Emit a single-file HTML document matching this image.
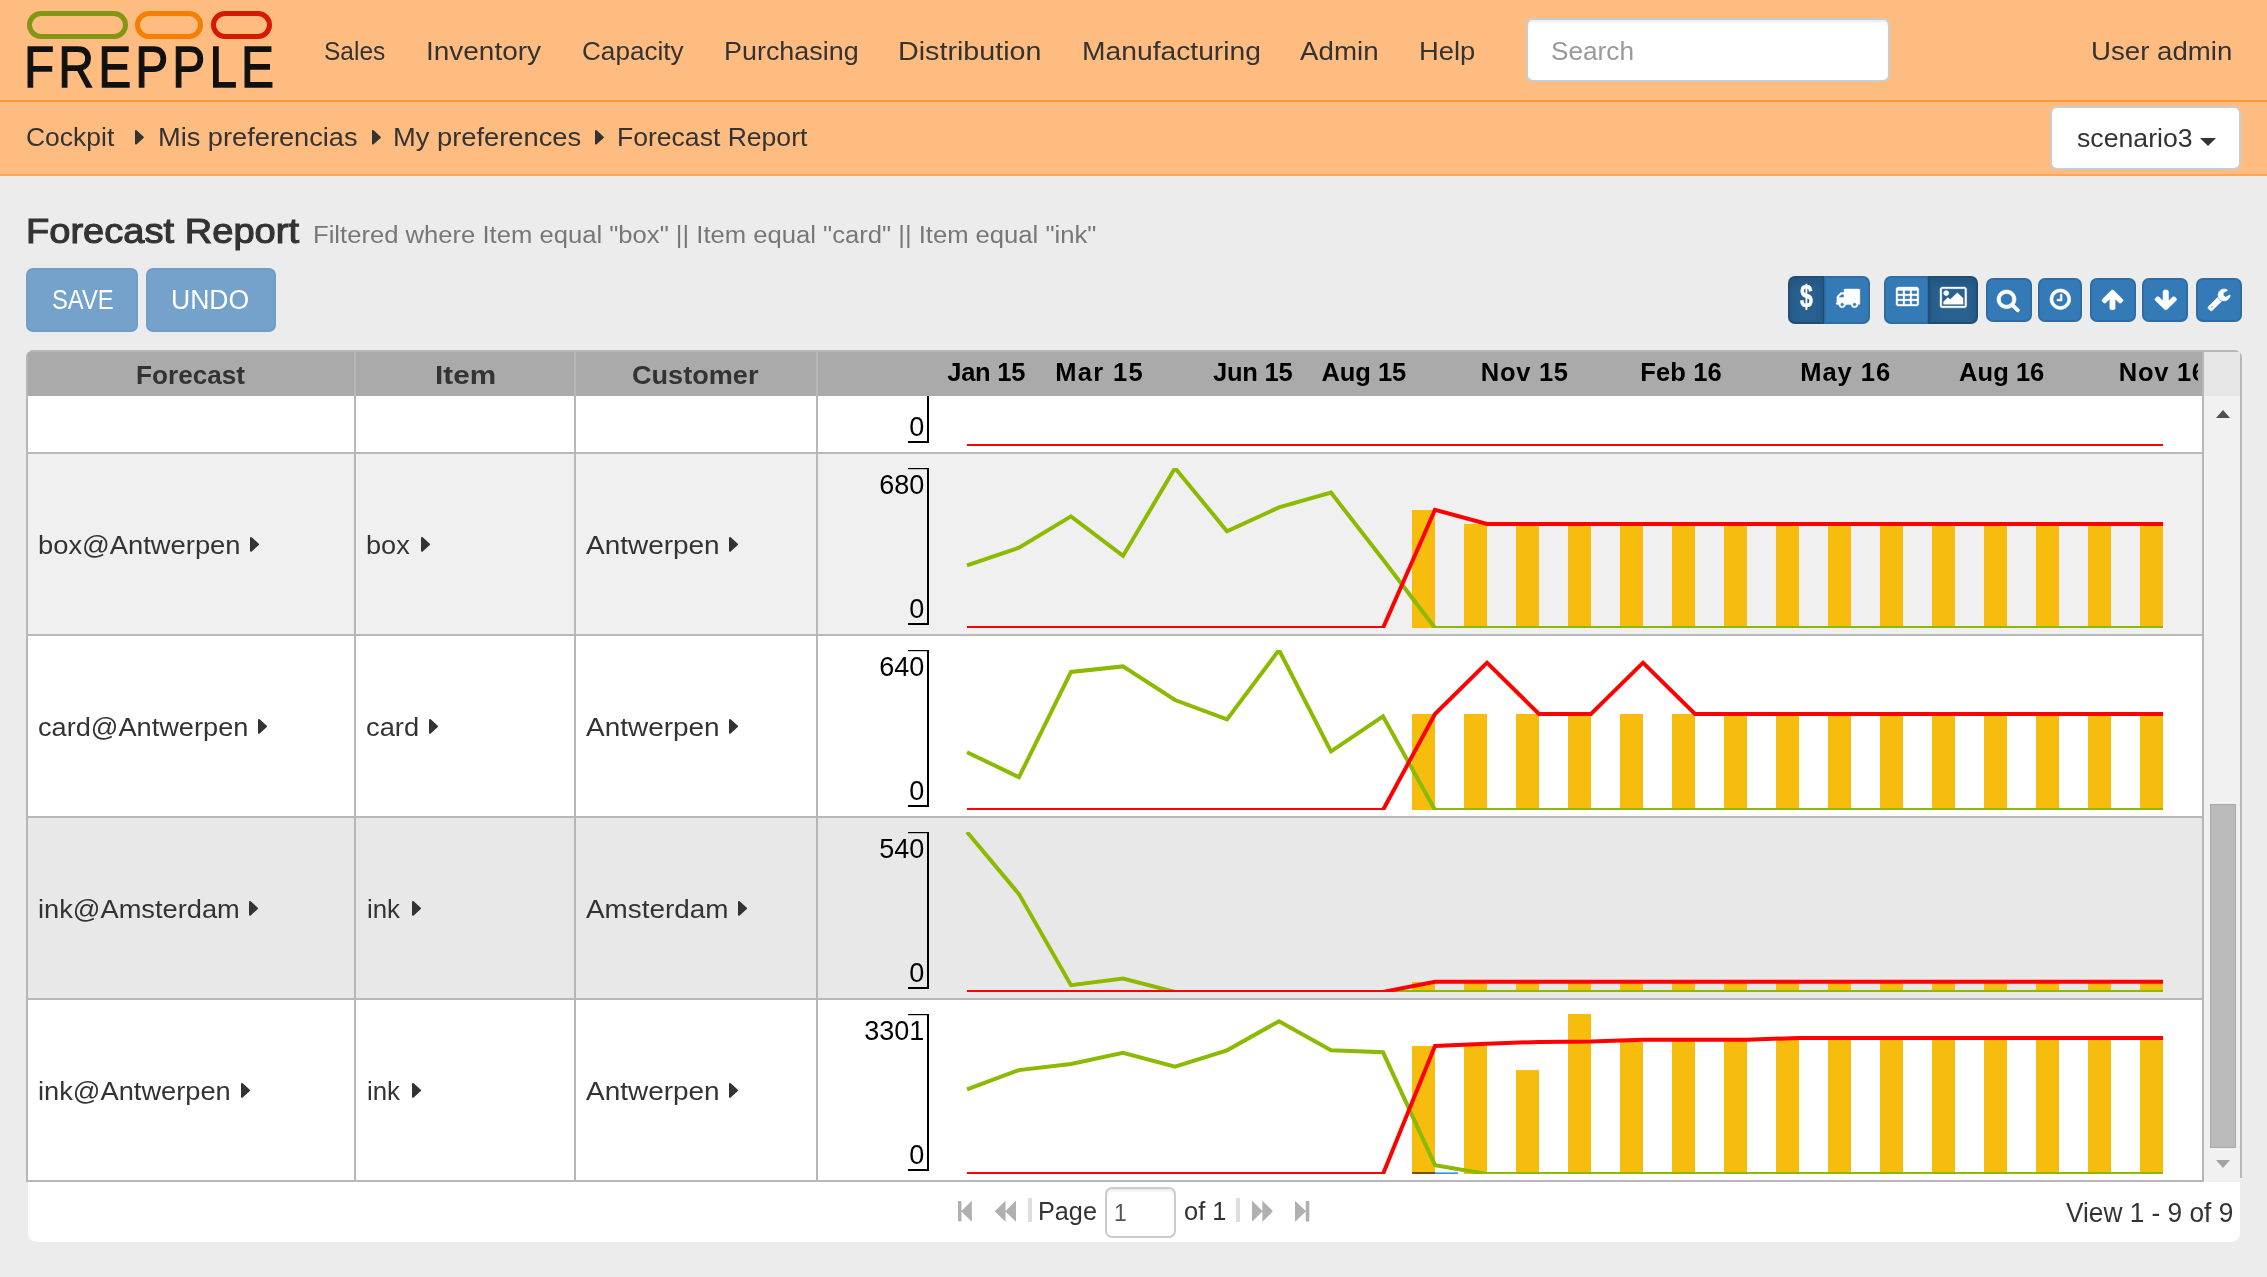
<!DOCTYPE html>
<html lang="en"><head><meta charset="utf-8"><title>Forecast Report - frePPLe</title>
<style>
html,body{margin:0;padding:0}
body{width:2267px;height:1277px;overflow:hidden;background:#ECECEC;font-family:"Liberation Sans",sans-serif;position:relative}
div,span,a,b,h1,small,svg.i{position:absolute;box-sizing:border-box;margin:0;padding:0;text-decoration:none}
.t{line-height:1;white-space:pre;transform-origin:0 0}
svg.i{display:block;overflow:visible}
#nav{left:0;top:0;width:2267px;height:100px;background:#FFBC80}
#navb{left:0;top:100px;width:2267px;height:2px;background:#FF9633}
#bc{left:0;top:102px;width:2267px;height:72px;background:#FFBC80}
#bcb{left:0;top:174px;width:2267px;height:2px;background:#FFA659}
.pill{top:11px;height:27.5px;border:5.3px solid;border-radius:14px}
#search{left:1526px;top:18px;width:364px;height:64px;background:#fff;border:2px solid #ccc;border-radius:7px;box-shadow:inset 0 2px 2px rgba(0,0,0,.075)}
#scen{left:2050px;top:106px;width:191px;height:63.5px;background:#fff;border:2px solid #ccc;border-radius:7px}
#scar{left:2200px;top:138.2px;width:0;height:0;border-left:8px solid transparent;border-right:8px solid transparent;border-top:8px solid #333}
.bdis{top:268px;height:63.5px;background:#74A2CA;border:2px solid #6F9DC6;border-radius:7px}
.btn{background:#337AB7;border:2px solid #2E6DA4;border-radius:7px;top:278px;height:44px}
.grp{top:276.2px;height:47.6px}
.act{background:#286090;border-color:#204D74;box-shadow:inset 0 5px 9px rgba(0,0,0,.125)}
#grid{left:26px;top:350px;width:2216px;height:832px;border-radius:8px 8px 0 0;overflow:hidden}
#pager{left:28px;top:1182px;width:2212px;height:60px;background:#fff;border-radius:0 0 9px 9px}
#grid div{position:absolute}
.vb{background:#B7B7B7;width:2px;top:0;height:832px}
.hb{background:#B8B8B8;height:2px;left:0;width:2178px}
.row{left:2px;width:2176px;height:180px;background:#fff}
#charts{position:absolute;left:0;top:0;width:2267px;height:1277px;display:block}
.ax{font-family:"Liberation Sans",sans-serif;font-size:27px;fill:#000}
.hl{font-family:"Liberation Sans",sans-serif;font-size:25.5px;font-weight:700;fill:#000}
.sep{background:#DDD;width:3.6px;top:1198px;height:24px}
#pin{left:1104.5px;top:1187px;width:71px;height:50.5px;background:#fff;border:2px solid #ccc;border-radius:7px;box-shadow:inset 0 2px 2px rgba(0,0,0,.075)}
</style></head>
<body>
<div id="nav"></div><div id="navb"></div><div id="bc"></div><div id="bcb"></div>
<div class="pill" style="left:26.8px;width:101px;border-color:#849616"></div>
<div class="pill" style="left:135px;width:67.6px;border-color:#F57F00"></div>
<div class="pill" style="left:211px;width:61.2px;border-color:#D41A00"></div>
<div id="search"></div>
<div id="scen"></div><div id="scar"></div>

<div class="bdis" style="left:26px;width:112px"></div>
<div class="bdis" style="left:146px;width:130px"></div>

<div class="btn grp act" style="left:1788px;width:37px;border-radius:7px 0 0 7px"></div>
<div class="btn grp" style="left:1823.7px;width:46.2px;border-radius:0 7px 7px 0"></div>
<div class="btn grp" style="left:1884px;width:45px;border-radius:7px 0 0 7px"></div>
<div class="btn grp act" style="left:1928px;width:50px;border-radius:0 7px 7px 0"></div>
<div class="btn" style="left:1986px;width:46px"></div>
<div class="btn" style="left:2038px;width:44px"></div>
<div class="btn" style="left:2090px;width:46px"></div>
<div class="btn" style="left:2142px;width:46px"></div>
<div class="btn" style="left:2196px;width:46px"></div>

<div id="grid">
  <div style="left:0;top:0;width:2178px;height:46px;background:#AAA"></div>
  <div style="left:2178px;top:0;width:38px;height:46px;background:#E6E6E6"></div>
  <div style="left:2178px;top:46px;width:38px;height:786px;background:#F1F1F1"></div>
  <div style="left:0;top:0;width:2216px;height:2px;background:#B5B5B5"></div>
  <div class="row" style="top:46px;height:56px"></div>
  <div class="row" style="top:104px;background:#F0F0F0"></div>
  <div class="row" style="top:286px"></div>
  <div class="row" style="top:468px;background:#E8E8E8"></div>
  <div class="row" style="top:650px"></div>
  <div class="hb" style="top:102px"></div><div class="hb" style="top:284px"></div><div class="hb" style="top:466px"></div><div class="hb" style="top:648px"></div><div class="hb" style="top:830px"></div>
  <div class="vb" style="left:0"></div><div class="vb" style="left:328px"></div><div class="vb" style="left:548px"></div><div class="vb" style="left:790px"></div><div class="vb" style="left:2176px"></div><div class="vb" style="left:2214px;height:828px"></div>
  <div style="left:2184px;top:454px;width:26px;height:344px;background:#BBB;border:1.5px solid #A9A9A9;box-sizing:border-box"></div>
  <div style="left:2189.5px;top:60px;width:0;height:0;border-left:7.5px solid transparent;border-right:7.5px solid transparent;border-bottom:8.5px solid #505050"></div>
  <div style="left:2189.5px;top:809.5px;width:0;height:0;border-left:7.5px solid transparent;border-right:7.5px solid transparent;border-top:8.5px solid #A3A3A3"></div>
</div>
<div id="pager"></div>
<div class="sep" style="left:1028.2px"></div><div class="sep" style="left:1236px"></div>
<div id="pin"></div>

<div id="layer" style="left:0;top:0;width:2267px;height:1277px;will-change:transform">
<svg id="charts" width="2267" height="1277" viewBox="0 0 2267 1277">
<rect x="927" y="396" width="2" height="47" fill="#000"/><rect x="908" y="441" width="21" height="2" fill="#000"/><text x="924.3" y="436.2" text-anchor="end" class="ax">0</text>
<svg x="940" y="396" width="1258" height="50" viewBox="940 396 1258 50" overflow="hidden"><polyline points="967.0,446 2163.0,446" fill="none" stroke="#FF0000" stroke-width="4"/></svg>
<rect x="927" y="468" width="2" height="157" fill="#000"/><rect x="908" y="468" width="21" height="1.2" fill="#000"/><text x="924.3" y="494.1" text-anchor="end" class="ax">680</text><rect x="908" y="623" width="21" height="2" fill="#000"/><text x="924.3" y="618.2" text-anchor="end" class="ax">0</text>
<svg x="940" y="468" width="1258" height="160" viewBox="940 468 1258 160" overflow="hidden"><rect x="1412.0" y="510.0" width="23" height="118.0" fill="#F6BD0F"/><rect x="1464.0" y="523.9" width="23" height="104.1" fill="#F6BD0F"/><rect x="1516.0" y="523.9" width="23" height="104.1" fill="#F6BD0F"/><rect x="1568.0" y="523.9" width="23" height="104.1" fill="#F6BD0F"/><rect x="1620.0" y="523.9" width="23" height="104.1" fill="#F6BD0F"/><rect x="1672.0" y="523.9" width="23" height="104.1" fill="#F6BD0F"/><rect x="1724.0" y="523.9" width="23" height="104.1" fill="#F6BD0F"/><rect x="1776.0" y="523.9" width="23" height="104.1" fill="#F6BD0F"/><rect x="1828.0" y="523.9" width="23" height="104.1" fill="#F6BD0F"/><rect x="1880.0" y="523.9" width="23" height="104.1" fill="#F6BD0F"/><rect x="1932.0" y="523.9" width="23" height="104.1" fill="#F6BD0F"/><rect x="1984.0" y="523.9" width="23" height="104.1" fill="#F6BD0F"/><rect x="2036.0" y="523.9" width="23" height="104.1" fill="#F6BD0F"/><rect x="2088.0" y="523.9" width="23" height="104.1" fill="#F6BD0F"/><rect x="2140.0" y="523.9" width="23" height="104.1" fill="#F6BD0F"/><polyline points="967.0,565.4 1019.0,547.7 1071.0,516.4 1123.0,555.9 1175.0,468.0 1227.0,531.2 1279.0,507.4 1331.0,492.6 1383.0,559.6 1435.0,628.0 1487.0,628.0 1539.0,628.0 1591.0,628.0 1643.0,628.0 1695.0,628.0 1747.0,628.0 1799.0,628.0 1851.0,628.0 1903.0,628.0 1955.0,628.0 2007.0,628.0 2059.0,628.0 2111.0,628.0 2163.0,628.0" fill="none" stroke="#8BBA00" stroke-width="4" stroke-linejoin="miter"/><polyline points="967.0,628.0 1019.0,628.0 1071.0,628.0 1123.0,628.0 1175.0,628.0 1227.0,628.0 1279.0,628.0 1331.0,628.0 1383.0,628.0 1435.0,509.8 1487.0,523.9 1539.0,523.9 1591.0,523.9 1643.0,523.9 1695.0,523.9 1747.0,523.9 1799.0,523.9 1851.0,523.9 1903.0,523.9 1955.0,523.9 2007.0,523.9 2059.0,523.9 2111.0,523.9 2163.0,523.9" fill="none" stroke="#FF0000" stroke-width="4" stroke-linejoin="miter"/></svg>
<rect x="927" y="650" width="2" height="157" fill="#000"/><rect x="908" y="650" width="21" height="1.2" fill="#000"/><text x="924.3" y="676.1" text-anchor="end" class="ax">640</text><rect x="908" y="805" width="21" height="2" fill="#000"/><text x="924.3" y="800.2" text-anchor="end" class="ax">0</text>
<svg x="940" y="650" width="1258" height="160" viewBox="940 650 1258 160" overflow="hidden"><rect x="1412.0" y="714.0" width="23" height="96.0" fill="#F6BD0F"/><rect x="1464.0" y="714.0" width="23" height="96.0" fill="#F6BD0F"/><rect x="1516.0" y="714.0" width="23" height="96.0" fill="#F6BD0F"/><rect x="1568.0" y="714.0" width="23" height="96.0" fill="#F6BD0F"/><rect x="1620.0" y="714.0" width="23" height="96.0" fill="#F6BD0F"/><rect x="1672.0" y="714.0" width="23" height="96.0" fill="#F6BD0F"/><rect x="1724.0" y="714.0" width="23" height="96.0" fill="#F6BD0F"/><rect x="1776.0" y="714.0" width="23" height="96.0" fill="#F6BD0F"/><rect x="1828.0" y="714.0" width="23" height="96.0" fill="#F6BD0F"/><rect x="1880.0" y="714.0" width="23" height="96.0" fill="#F6BD0F"/><rect x="1932.0" y="714.0" width="23" height="96.0" fill="#F6BD0F"/><rect x="1984.0" y="714.0" width="23" height="96.0" fill="#F6BD0F"/><rect x="2036.0" y="714.0" width="23" height="96.0" fill="#F6BD0F"/><rect x="2088.0" y="714.0" width="23" height="96.0" fill="#F6BD0F"/><rect x="2140.0" y="714.0" width="23" height="96.0" fill="#F6BD0F"/><polyline points="967.0,752.2 1019.0,777.2 1071.0,671.9 1123.0,666.4 1175.0,700.0 1227.0,719.4 1279.0,650.0 1331.0,751.4 1383.0,716.3 1435.0,810.0 1487.0,810.0 1539.0,810.0 1591.0,810.0 1643.0,810.0 1695.0,810.0 1747.0,810.0 1799.0,810.0 1851.0,810.0 1903.0,810.0 1955.0,810.0 2007.0,810.0 2059.0,810.0 2111.0,810.0 2163.0,810.0" fill="none" stroke="#8BBA00" stroke-width="4" stroke-linejoin="miter"/><polyline points="967.0,810.0 1019.0,810.0 1071.0,810.0 1123.0,810.0 1175.0,810.0 1227.0,810.0 1279.0,810.0 1331.0,810.0 1383.0,810.0 1435.0,714.0 1487.0,662.7 1539.0,714.0 1591.0,714.0 1643.0,662.7 1695.0,714.0 1747.0,714.0 1799.0,714.0 1851.0,714.0 1903.0,714.0 1955.0,714.0 2007.0,714.0 2059.0,714.0 2111.0,714.0 2163.0,714.0" fill="none" stroke="#FF0000" stroke-width="4" stroke-linejoin="miter"/></svg>
<rect x="927" y="832" width="2" height="157" fill="#000"/><rect x="908" y="832" width="21" height="1.2" fill="#000"/><text x="924.3" y="858.1" text-anchor="end" class="ax">540</text><rect x="908" y="987" width="21" height="2" fill="#000"/><text x="924.3" y="982.2" text-anchor="end" class="ax">0</text>
<svg x="940" y="832" width="1258" height="160" viewBox="940 832 1258 160" overflow="hidden"><rect x="1412.0" y="982.0" width="23" height="10.0" fill="#F6BD0F"/><rect x="1464.0" y="982.0" width="23" height="10.0" fill="#F6BD0F"/><rect x="1516.0" y="982.0" width="23" height="10.0" fill="#F6BD0F"/><rect x="1568.0" y="982.0" width="23" height="10.0" fill="#F6BD0F"/><rect x="1620.0" y="982.0" width="23" height="10.0" fill="#F6BD0F"/><rect x="1672.0" y="982.0" width="23" height="10.0" fill="#F6BD0F"/><rect x="1724.0" y="982.0" width="23" height="10.0" fill="#F6BD0F"/><rect x="1776.0" y="982.0" width="23" height="10.0" fill="#F6BD0F"/><rect x="1828.0" y="982.0" width="23" height="10.0" fill="#F6BD0F"/><rect x="1880.0" y="982.0" width="23" height="10.0" fill="#F6BD0F"/><rect x="1932.0" y="982.0" width="23" height="10.0" fill="#F6BD0F"/><rect x="1984.0" y="982.0" width="23" height="10.0" fill="#F6BD0F"/><rect x="2036.0" y="982.0" width="23" height="10.0" fill="#F6BD0F"/><rect x="2088.0" y="982.0" width="23" height="10.0" fill="#F6BD0F"/><rect x="2140.0" y="982.0" width="23" height="10.0" fill="#F6BD0F"/><polyline points="967.0,832.0 1019.0,894.1 1071.0,985.2 1123.0,978.6 1175.0,992.0 1227.0,992.0 1279.0,992.0 1331.0,992.0 1383.0,992.0 1435.0,992.0 1487.0,992.0 1539.0,992.0 1591.0,992.0 1643.0,992.0 1695.0,992.0 1747.0,992.0 1799.0,992.0 1851.0,992.0 1903.0,992.0 1955.0,992.0 2007.0,992.0 2059.0,992.0 2111.0,992.0 2163.0,992.0" fill="none" stroke="#8BBA00" stroke-width="4" stroke-linejoin="miter"/><polyline points="967.0,992.0 1019.0,992.0 1071.0,992.0 1123.0,992.0 1175.0,992.0 1227.0,992.0 1279.0,992.0 1331.0,992.0 1383.0,992.0 1435.0,981.8 1487.0,981.8 1539.0,981.8 1591.0,981.8 1643.0,981.8 1695.0,981.8 1747.0,981.8 1799.0,981.8 1851.0,981.8 1903.0,981.8 1955.0,981.8 2007.0,981.8 2059.0,981.8 2111.0,981.8 2163.0,981.8" fill="none" stroke="#FF0000" stroke-width="4" stroke-linejoin="miter"/></svg>
<rect x="927" y="1014" width="2" height="157" fill="#000"/><rect x="908" y="1014" width="21" height="1.2" fill="#000"/><text x="924.3" y="1040.1" text-anchor="end" class="ax">3301</text><rect x="908" y="1169" width="21" height="2" fill="#000"/><text x="924.3" y="1164.2" text-anchor="end" class="ax">0</text>
<svg x="940" y="1014" width="1258" height="160" viewBox="940 1014 1258 160" overflow="hidden"><rect x="1412.0" y="1045.9" width="23" height="128.1" fill="#F6BD0F"/><rect x="1464.0" y="1045.5" width="23" height="128.5" fill="#F6BD0F"/><rect x="1516.0" y="1070.1" width="23" height="103.9" fill="#F6BD0F"/><rect x="1568.0" y="1014.0" width="23" height="160.0" fill="#F6BD0F"/><rect x="1620.0" y="1041.9" width="23" height="132.1" fill="#F6BD0F"/><rect x="1672.0" y="1040.0" width="23" height="134.0" fill="#F6BD0F"/><rect x="1724.0" y="1040.0" width="23" height="134.0" fill="#F6BD0F"/><rect x="1776.0" y="1039.0" width="23" height="135.0" fill="#F6BD0F"/><rect x="1828.0" y="1038.5" width="23" height="135.5" fill="#F6BD0F"/><rect x="1880.0" y="1038.5" width="23" height="135.5" fill="#F6BD0F"/><rect x="1932.0" y="1038.5" width="23" height="135.5" fill="#F6BD0F"/><rect x="1984.0" y="1038.5" width="23" height="135.5" fill="#F6BD0F"/><rect x="2036.0" y="1038.5" width="23" height="135.5" fill="#F6BD0F"/><rect x="2088.0" y="1038.5" width="23" height="135.5" fill="#F6BD0F"/><rect x="2140.0" y="1038.5" width="23" height="135.5" fill="#F6BD0F"/><rect x="1412.0" y="1172" width="23" height="2" fill="#7B4F0A"/><rect x="1435.0" y="1172.4" width="23" height="1.6" fill="#2B95EC"/><polyline points="967.0,1089.3 1019.0,1070.1 1071.0,1064.0 1123.0,1052.9 1175.0,1066.6 1227.0,1050.3 1279.0,1021.2 1331.0,1050.3 1383.0,1052.3 1435.0,1165.2 1487.0,1174.0 1539.0,1174.0 1591.0,1174.0 1643.0,1174.0 1695.0,1174.0 1747.0,1174.0 1799.0,1174.0 1851.0,1174.0 1903.0,1174.0 1955.0,1174.0 2007.0,1174.0 2059.0,1174.0 2111.0,1174.0 2163.0,1174.0" fill="none" stroke="#8BBA00" stroke-width="4" stroke-linejoin="miter"/><polyline points="967.0,1174.0 1019.0,1174.0 1071.0,1174.0 1123.0,1174.0 1175.0,1174.0 1227.0,1174.0 1279.0,1174.0 1331.0,1174.0 1383.0,1174.0 1435.0,1045.9 1487.0,1043.7 1539.0,1041.9 1591.0,1041.5 1643.0,1039.7 1695.0,1039.7 1747.0,1039.7 1799.0,1037.9 1851.0,1037.9 1903.0,1037.9 1955.0,1037.9 2007.0,1037.9 2059.0,1037.9 2111.0,1037.9 2163.0,1037.9" fill="none" stroke="#FF0000" stroke-width="4" stroke-linejoin="miter"/></svg>
<svg x="940" y="351" width="1258" height="45" viewBox="940 351 1258 45" overflow="hidden"><text x="947.20" y="381" class="hl" letter-spacing="-0.221">Jan 15</text><text x="1055.20" y="381" class="hl" letter-spacing="1.317">Mar 15</text><text x="1213.00" y="381" class="hl" letter-spacing="-0.240">Jun 15</text><text x="1321.50" y="381" class="hl" letter-spacing="-0.067">Aug 15</text><text x="1480.80" y="381" class="hl" letter-spacing="0.712">Nov 15</text><text x="1640.30" y="381" class="hl" letter-spacing="0.140">Feb 16</text><text x="1800.20" y="381" class="hl" letter-spacing="0.966">May 16</text><text x="1959.10" y="381" class="hl" letter-spacing="0.033">Aug 16</text><text x="2118.80" y="381" class="hl" letter-spacing="0.712">Nov 16</text></svg>
</svg>
<svg class="i" style="left:1835.61px;top:288.81px" width="23.88" height="18.89" viewBox="64 256 1728 1408" preserveAspectRatio="none"><path fill="#fff" stroke="#fff" stroke-width="30" stroke-linejoin="round" d="M640 1408q0-52-38-90t-90-38-90 38-38 90 38 90 90 38 90-38 38-90zM256 896h384v-256h-158q-13 0-22 9l-195 195q-9 9-9 22v30zM1536 1408q0-52-38-90t-90-38-90 38-38 90 38 90 90 38 90-38 38-90zM1792 320v1024q0 15-4 26.500t-13.500 18.500-16.500 11.500-23.500 6-22.500 2-25.500 0-22.500-0.500q0 106-75 181t-181 75-181-75-75-181h-384q0 106-75 181t-181 75-181-75-75-181h-64q-3 0-22.500 0.500t-25.500 0-22.500-2-23.500-6-16.500-11.500-13.500-18.500-4-26.500q0-26 19-45t45-19v-320q0-8-0.500-35t0-38 2.500-34.500 6.500-37 14-30.500 22.500-30l198-198q19-19 50.500-32t58.500-13h160v-192q0-26 19-45t45-19h1024q26 0 45 19t19 45z"/></svg>
<svg class="i" style="left:1896.17px;top:287.17px" width="22.75" height="19.06" viewBox="0 128 1664 1408" preserveAspectRatio="none"><path fill="#fff" stroke="#fff" stroke-width="25" stroke-linejoin="round" d="M512 1376v-192q0-14-9-23t-23-9h-320q-14 0-23 9t-9 23v192q0 14 9 23t23 9h320q14 0 23-9t9-23zM512 992v-192q0-14-9-23t-23-9h-320q-14 0-23 9t-9 23v192q0 14 9 23t23 9h320q14 0 23-9t9-23zM1024 1376v-192q0-14-9-23t-23-9h-320q-14 0-23 9t-9 23v192q0 14 9 23t23 9h320q14 0 23-9t9-23zM512 608v-192q0-14-9-23t-23-9h-320q-14 0-23 9t-9 23v192q0 14 9 23t23 9h320q14 0 23-9t9-23zM1024 992v-192q0-14-9-23t-23-9h-320q-14 0-23 9t-9 23v192q0 14 9 23t23 9h320q14 0 23-9t9-23zM1536 1376v-192q0-14-9-23t-23-9h-320q-14 0-23 9t-9 23v192q0 14 9 23t23 9h320q14 0 23-9t9-23zM1024 608v-192q0-14-9-23t-23-9h-320q-14 0-23 9t-9 23v192q0 14 9 23t23 9h320q14 0 23-9t9-23zM1536 992v-192q0-14-9-23t-23-9h-320q-14 0-23 9t-9 23v192q0 14 9 23t23 9h320q14 0 23-9t9-23zM1536 608v-192q0-14-9-23t-23-9h-320q-14 0-23 9t-9 23v192q0 14 9 23t23 9h320q14 0 23-9t9-23zM1664 288v1088q0 66-47 113t-113 47h-1344q-66 0-113-47t-47-113v-1088q0-66 47-113t113-47h1344q66 0 113 47t47 113z"/></svg>
<svg class="i" style="left:1940.28px;top:287.17px" width="26.65" height="20.85" viewBox="0 128 1920 1536" preserveAspectRatio="none"><path fill="#fff" stroke="#fff" stroke-width="25" stroke-linejoin="round" d="M640 576q0 80-56 136t-136 56-136-56-56-136 56-136 136-56 136 56 56 136zM1664 960v448h-1408v-192l320-320 160 160 512-512zM1760 256h-1600q-13 0-22.500 9.500t-9.500 22.500v1216q0 13 9.500 22.500t22.500 9.500h1600q13 0 22.500-9.500t9.500-22.500v-1216q0-13-9.500-22.500t-22.500-9.500zM1920 288v1216q0 66-47 113t-113 47h-1600q-66 0-113-47t-47-113v-1216q0-66 47-113t113-47h1600q66 0 113 47t47 113z"/></svg>
<svg class="i" style="left:1997.31px;top:289.61px" width="22.48" height="21.99" viewBox="0 128 1664 1664" preserveAspectRatio="none"><path fill="#fff" stroke="#fff" stroke-width="45" stroke-linejoin="round" d="M1152 832q0-185-131.5-316.5t-316.5-131.5-316.5 131.5-131.5 316.5 131.5 316.5 316.5 131.5 316.5-131.5 131.5-316.5zM1664 1664q0 52-38 90t-90 38q-54 0-90-38l-343-342q-179 124-399 124-143 0-273.5-55.5t-225-150-150-225-55.5-273.5 55.5-273.5 150-225 225-150 273.5-55.5 273.5 55.5 225 150 150 225 55.5 273.5q0 220-124 399l343 343q37 37 37 90z"/></svg>
<svg class="i" style="left:2050.31px;top:289.31px" width="20.68" height="20.48" viewBox="0 128 1536 1536" preserveAspectRatio="none"><path fill="#fff" stroke="#fff" stroke-width="45" stroke-linejoin="round" d="M896 544v448q0 14-9 23t-23 9h-320q-14 0-23-9t-9-23v-64q0-14 9-23t23-9h224v-352q0-14 9-23t23-9h64q14 0 23 9t9 23zM1312 896q0-148-73-273t-198-198-273-73-273 73-198 198-73 273 73 273 198 198 273 73 273-73 198-198 73-273zM1536 896q0 209-103 385.5t-279.5 279.5-385.5 103-385.5-103-279.5-279.5-103-385.5 103-385.5 279.5-279.5 385.5-103 385.5 103 279.5 279.5 103 385.5z"/></svg>
<svg class="i" style="left:2101.91px;top:290.11px" width="20.98" height="19.68" viewBox="117 192 1558 1472" preserveAspectRatio="none"><path fill="#fff" stroke="#fff" stroke-width="45" stroke-linejoin="round" d="M1675 971q0 51-37 90l-75 75q-38 38-91 38-54 0-90-38l-294-293v704q0 52-37.5 84.5t-90.5 32.5h-128q-53 0-90.5-32.5t-37.5-84.5v-704l-294 293q-36 38-90 38t-90-38l-75-75q-38-38-38-90 0-53 38-91l651-651q35-37 90-37 54 0 91 37l651 651q37 39 37 91z"/></svg>
<svg class="i" style="left:2155.02px;top:289.51px" width="21.56" height="19.78" viewBox="117 128 1558 1483" preserveAspectRatio="none"><path fill="#fff" stroke="#fff" stroke-width="45" stroke-linejoin="round" d="M1675 832q0 53-37 90l-651 652q-39 37-91 37-53 0-90-37l-651-652q-38-36-38-90 0-53 38-91l74-75q39-37 91-37 53 0 90 37l294 294v-704q0-52 38-90t90-38h128q52 0 90 38t38 90v704l294-294q37-37 90-37 52 0 91 37l75 75q37 39 37 91z"/></svg>
<svg class="i" style="left:2207.91px;top:289.31px" width="22.17" height="21.79" viewBox="85 128 1641 1643" preserveAspectRatio="none"><path fill="#fff" stroke="#fff" stroke-width="45" stroke-linejoin="round" d="M448 1472q0-26-19-45t-45-19-45 19-19 45 19 45 45 19 45-19 19-45zM1092 1052l-682 682q-37 37-90 37-52 0-91-37l-106-108q-38-36-38-90 0-53 38-91l681-681q39 98 114.500 173.500t173.500 114.500zM1726 617q0 39-23 106-47 134-164.500 217.500t-258.500 83.500q-185 0-316.500-131.500t-131.500-316.500 131.500-316.500 316.500-131.500q58 0 121.500 16.500t107.500 46.500q16 11 16 28t-16 28l-293 169v224l193 107q5-3 79-48.500t135.500-81 70.500-35.500q15 0 23.500 10t8.500 25z"/></svg>
<svg class="i" style="left:135.20px;top:129.80px" width="8.90" height="14.60" viewBox="0 384 576 1024" preserveAspectRatio="none"><path fill="#333" stroke="#333" stroke-width="0" stroke-linejoin="round" d="M576 896q0 26-19 45l-448 448q-19 19-45 19t-45-19-19-45v-896q0-26 19-45t45-19 45 19l448 448q19 19 19 45z"/></svg>
<svg class="i" style="left:371.50px;top:129.80px" width="8.90" height="14.60" viewBox="0 384 576 1024" preserveAspectRatio="none"><path fill="#333" stroke="#333" stroke-width="0" stroke-linejoin="round" d="M576 896q0 26-19 45l-448 448q-19 19-45 19t-45-19-19-45v-896q0-26 19-45t45-19 45 19l448 448q19 19 19 45z"/></svg>
<svg class="i" style="left:595.40px;top:129.80px" width="8.90" height="14.60" viewBox="0 384 576 1024" preserveAspectRatio="none"><path fill="#333" stroke="#333" stroke-width="0" stroke-linejoin="round" d="M576 896q0 26-19 45l-448 448q-19 19-45 19t-45-19-19-45v-896q0-26 19-45t45-19 45 19l448 448q19 19 19 45z"/></svg>
<svg class="i" style="left:250.00px;top:537.20px" width="9.10" height="14.70" viewBox="0 384 576 1024" preserveAspectRatio="none"><path fill="#333" stroke="#333" stroke-width="0" stroke-linejoin="round" d="M576 896q0 26-19 45l-448 448q-19 19-45 19t-45-19-19-45v-896q0-26 19-45t45-19 45 19l448 448q19 19 19 45z"/></svg>
<svg class="i" style="left:421.40px;top:537.20px" width="9.10" height="14.70" viewBox="0 384 576 1024" preserveAspectRatio="none"><path fill="#333" stroke="#333" stroke-width="0" stroke-linejoin="round" d="M576 896q0 26-19 45l-448 448q-19 19-45 19t-45-19-19-45v-896q0-26 19-45t45-19 45 19l448 448q19 19 19 45z"/></svg>
<svg class="i" style="left:729.20px;top:537.20px" width="9.10" height="14.70" viewBox="0 384 576 1024" preserveAspectRatio="none"><path fill="#333" stroke="#333" stroke-width="0" stroke-linejoin="round" d="M576 896q0 26-19 45l-448 448q-19 19-45 19t-45-19-19-45v-896q0-26 19-45t45-19 45 19l448 448q19 19 19 45z"/></svg>
<svg class="i" style="left:258.30px;top:719.20px" width="9.10" height="14.70" viewBox="0 384 576 1024" preserveAspectRatio="none"><path fill="#333" stroke="#333" stroke-width="0" stroke-linejoin="round" d="M576 896q0 26-19 45l-448 448q-19 19-45 19t-45-19-19-45v-896q0-26 19-45t45-19 45 19l448 448q19 19 19 45z"/></svg>
<svg class="i" style="left:429.10px;top:719.20px" width="9.10" height="14.70" viewBox="0 384 576 1024" preserveAspectRatio="none"><path fill="#333" stroke="#333" stroke-width="0" stroke-linejoin="round" d="M576 896q0 26-19 45l-448 448q-19 19-45 19t-45-19-19-45v-896q0-26 19-45t45-19 45 19l448 448q19 19 19 45z"/></svg>
<svg class="i" style="left:729.20px;top:719.20px" width="9.10" height="14.70" viewBox="0 384 576 1024" preserveAspectRatio="none"><path fill="#333" stroke="#333" stroke-width="0" stroke-linejoin="round" d="M576 896q0 26-19 45l-448 448q-19 19-45 19t-45-19-19-45v-896q0-26 19-45t45-19 45 19l448 448q19 19 19 45z"/></svg>
<svg class="i" style="left:249.40px;top:901.20px" width="9.10" height="14.70" viewBox="0 384 576 1024" preserveAspectRatio="none"><path fill="#333" stroke="#333" stroke-width="0" stroke-linejoin="round" d="M576 896q0 26-19 45l-448 448q-19 19-45 19t-45-19-19-45v-896q0-26 19-45t45-19 45 19l448 448q19 19 19 45z"/></svg>
<svg class="i" style="left:412.10px;top:901.20px" width="9.10" height="14.70" viewBox="0 384 576 1024" preserveAspectRatio="none"><path fill="#333" stroke="#333" stroke-width="0" stroke-linejoin="round" d="M576 896q0 26-19 45l-448 448q-19 19-45 19t-45-19-19-45v-896q0-26 19-45t45-19 45 19l448 448q19 19 19 45z"/></svg>
<svg class="i" style="left:738.20px;top:901.20px" width="9.10" height="14.70" viewBox="0 384 576 1024" preserveAspectRatio="none"><path fill="#333" stroke="#333" stroke-width="0" stroke-linejoin="round" d="M576 896q0 26-19 45l-448 448q-19 19-45 19t-45-19-19-45v-896q0-26 19-45t45-19 45 19l448 448q19 19 19 45z"/></svg>
<svg class="i" style="left:241.30px;top:1083.20px" width="9.10" height="14.70" viewBox="0 384 576 1024" preserveAspectRatio="none"><path fill="#333" stroke="#333" stroke-width="0" stroke-linejoin="round" d="M576 896q0 26-19 45l-448 448q-19 19-45 19t-45-19-19-45v-896q0-26 19-45t45-19 45 19l448 448q19 19 19 45z"/></svg>
<svg class="i" style="left:412.10px;top:1083.20px" width="9.10" height="14.70" viewBox="0 384 576 1024" preserveAspectRatio="none"><path fill="#333" stroke="#333" stroke-width="0" stroke-linejoin="round" d="M576 896q0 26-19 45l-448 448q-19 19-45 19t-45-19-19-45v-896q0-26 19-45t45-19 45 19l448 448q19 19 19 45z"/></svg>
<svg class="i" style="left:729.20px;top:1083.20px" width="9.10" height="14.70" viewBox="0 384 576 1024" preserveAspectRatio="none"><path fill="#333" stroke="#333" stroke-width="0" stroke-linejoin="round" d="M576 896q0 26-19 45l-448 448q-19 19-45 19t-45-19-19-45v-896q0-26 19-45t45-19 45 19l448 448q19 19 19 45z"/></svg>
<svg class="i" style="left:958.40px;top:1201.20px" width="13.90" height="20.50" viewBox="0 126.55999755859375 1024 1538.8798828125" preserveAspectRatio="none"><path fill="#B0B0B0" stroke="#B0B0B0" stroke-width="0" stroke-linejoin="round" d="M979 141q19-19 32-13t13 32v1472q0 26-13 32t-32-13l-710-710q-9-9-13-19v678q0 26-19 45t-45 19h-128q-26 0-45-19t-19-45v-1408q0-26 19-45t45-19h128q26 0 45 19t19 45v678q4-11 13-19z"/></svg>
<svg class="i" style="left:994.80px;top:1201.20px" width="21.00" height="20.50" viewBox="186 126.55999755859375 1542 1538.8798828125" preserveAspectRatio="none"><path fill="#B0B0B0" stroke="#B0B0B0" stroke-width="0" stroke-linejoin="round" d="M1683 141q19-19 32-13t13 32v1472q0 26-13 32t-32-13l-710-710q-9-9-13-19v710q0 26-13 32t-32-13l-710-710q-19-19-19-45t19-45l710-710q19-19 32-13t13 32v710q4-11 13-19z"/></svg>
<svg class="i" style="left:1252.40px;top:1201.20px" width="20.80" height="20.50" viewBox="0 126.55999755859375 1542 1538.8798828125" preserveAspectRatio="none"><path fill="#B0B0B0" stroke="#B0B0B0" stroke-width="0" stroke-linejoin="round" d="M45 1651q-19 19-32 13t-13-32v-1472q0-26 13-32t32 13l710 710q8 8 13 19v-710q0-26 13-32t32 13l710 710q19 19 19 45t-19 45l-710 710q-19 19-32 13t-13-32v-710q-5 10-13 19z"/></svg>
<svg class="i" style="left:1294.80px;top:1201.20px" width="14.30" height="20.50" viewBox="0 126.55999755859375 1024 1538.8798828125" preserveAspectRatio="none"><path fill="#B0B0B0" stroke="#B0B0B0" stroke-width="0" stroke-linejoin="round" d="M45 1651q-19 19-32 13t-13-32v-1472q0-26 13-32t32 13l710 710q8 8 13 19v-678q0-26 19-45t45-19h128q26 0 45 19t19 45v1408q0 26-19 45t-45 19h-128q-26 0-45-19t-19-45v-678q-5 10-13 19z"/></svg>
<a class="t" style="left:23.96px;top:38.63px;font-size:57.5px;font-weight:400;color:#111;letter-spacing:4.789px;-webkit-text-stroke:1.3px #111;transform:scaleX(0.8600);">FREPPLE</a>
<span class="t" style="left:1799.90px;top:280.58px;font-size:30.5px;font-weight:700;color:#fff;letter-spacing:0.000px;-webkit-text-stroke:0.5px #fff;transform:scaleX(0.7529);">$</span>
<a class="t" style="left:324.16px;top:37.79px;font-size:26px;font-weight:400;color:#333;letter-spacing:0.000px;transform:scaleX(0.9416);">Sales</a>
<a class="t" style="left:425.75px;top:37.79px;font-size:26px;font-weight:400;color:#333;letter-spacing:0.000px;transform:scaleX(1.0758);">Inventory</a>
<a class="t" style="left:582.10px;top:37.79px;font-size:26px;font-weight:400;color:#333;letter-spacing:0.000px;transform:scaleX(1.0044);">Capacity</a>
<a class="t" style="left:724.43px;top:37.79px;font-size:26px;font-weight:400;color:#333;letter-spacing:0.000px;transform:scaleX(1.0354);">Purchasing</a>
<a class="t" style="left:898.39px;top:37.79px;font-size:26px;font-weight:400;color:#333;letter-spacing:0.000px;transform:scaleX(1.1028);">Distribution</a>
<a class="t" style="left:1081.83px;top:37.79px;font-size:26px;font-weight:400;color:#333;letter-spacing:0.000px;transform:scaleX(1.0862);">Manufacturing</a>
<a class="t" style="left:1300.40px;top:37.79px;font-size:26px;font-weight:400;color:#333;letter-spacing:0.000px;transform:scaleX(1.0659);">Admin</a>
<a class="t" style="left:1418.69px;top:37.79px;font-size:26px;font-weight:400;color:#333;letter-spacing:0.000px;transform:scaleX(1.0527);">Help</a>
<span class="t" style="left:1551.09px;top:37.99px;font-size:26px;font-weight:400;color:#999;letter-spacing:0.000px;transform:scaleX(1.0073);">Search</span>
<a class="t" style="left:2090.77px;top:37.99px;font-size:26px;font-weight:400;color:#333;letter-spacing:0.000px;transform:scaleX(1.0628);">User admin</a>
<a class="t" style="left:26.18px;top:123.69px;font-size:26px;font-weight:400;color:#333;letter-spacing:0.000px;transform:scaleX(1.0177);">Cockpit</a>
<a class="t" style="left:157.61px;top:123.69px;font-size:26px;font-weight:400;color:#333;letter-spacing:0.000px;transform:scaleX(1.0464);">Mis preferencias</a>
<a class="t" style="left:393.20px;top:123.69px;font-size:26px;font-weight:400;color:#333;letter-spacing:0.000px;transform:scaleX(1.0498);">My preferences</a>
<span class="t" style="left:617.36px;top:123.69px;font-size:26px;font-weight:400;color:#333;letter-spacing:0.000px;transform:scaleX(1.0212);">Forecast Report</span>
<span class="t" style="left:2076.60px;top:125.29px;font-size:26px;font-weight:400;color:#333;letter-spacing:0.000px;transform:scaleX(1.0252);">scenario3</span>
<h1 class="t" style="left:26.20px;top:213.63px;font-size:34.7px;font-weight:400;color:#333;letter-spacing:0.000px;-webkit-text-stroke:1.1px #333;transform:scaleX(1.0977);">Forecast Report</h1>
<small class="t" style="left:313.09px;top:223.93px;font-size:23px;font-weight:400;color:#777;letter-spacing:0.000px;transform:scaleX(1.1141);">Filtered where Item equal &quot;box&quot; || Item equal &quot;card&quot; || Item equal &quot;ink&quot;</small>
<span class="t" style="left:51.51px;top:287.21px;font-size:26.8px;font-weight:400;color:#fff;letter-spacing:0.000px;transform:scaleX(0.8872);">SAVE</span>
<span class="t" style="left:170.92px;top:287.21px;font-size:26.8px;font-weight:400;color:#fff;letter-spacing:0.000px;transform:scaleX(0.9914);">UNDO</span>
<b class="t" style="left:136.19px;top:362.09px;font-size:26px;font-weight:700;color:#333;letter-spacing:0.000px;transform:scaleX(1.0063);">Forecast</b>
<b class="t" style="left:434.66px;top:362.09px;font-size:26px;font-weight:700;color:#333;letter-spacing:0.000px;transform:scaleX(1.1414);">Item</b>
<b class="t" style="left:632.36px;top:362.09px;font-size:26px;font-weight:700;color:#333;letter-spacing:0.000px;transform:scaleX(1.0421);">Customer</b>
<a class="t" style="left:38.35px;top:532.09px;font-size:26px;font-weight:400;color:#333;letter-spacing:0.000px;transform:scaleX(1.0513);">box@Antwerpen</a>
<a class="t" style="left:366.36px;top:532.09px;font-size:26px;font-weight:400;color:#333;letter-spacing:0.000px;transform:scaleX(1.0435);">box</a>
<a class="t" style="left:586.20px;top:532.09px;font-size:26px;font-weight:400;color:#333;letter-spacing:0.000px;transform:scaleX(1.0754);">Antwerpen</a>
<a class="t" style="left:37.95px;top:714.09px;font-size:26px;font-weight:400;color:#333;letter-spacing:0.000px;transform:scaleX(1.0452);">card@Antwerpen</a>
<a class="t" style="left:366.35px;top:714.09px;font-size:26px;font-weight:400;color:#333;letter-spacing:0.000px;transform:scaleX(1.0495);">card</a>
<a class="t" style="left:586.20px;top:714.09px;font-size:26px;font-weight:400;color:#333;letter-spacing:0.000px;transform:scaleX(1.0754);">Antwerpen</a>
<a class="t" style="left:38.35px;top:896.09px;font-size:26px;font-weight:400;color:#333;letter-spacing:0.000px;transform:scaleX(1.0480);">ink@Amsterdam</a>
<a class="t" style="left:366.81px;top:896.09px;font-size:26px;font-weight:400;color:#333;letter-spacing:0.000px;transform:scaleX(0.9929);">ink</a>
<a class="t" style="left:586.20px;top:896.09px;font-size:26px;font-weight:400;color:#333;letter-spacing:0.000px;transform:scaleX(1.0719);">Amsterdam</a>
<a class="t" style="left:38.35px;top:1078.09px;font-size:26px;font-weight:400;color:#333;letter-spacing:0.000px;transform:scaleX(1.0481);">ink@Antwerpen</a>
<a class="t" style="left:366.81px;top:1078.09px;font-size:26px;font-weight:400;color:#333;letter-spacing:0.000px;transform:scaleX(0.9929);">ink</a>
<a class="t" style="left:586.20px;top:1078.09px;font-size:26px;font-weight:400;color:#333;letter-spacing:0.000px;transform:scaleX(1.0754);">Antwerpen</a>
<span class="t" style="left:1038.10px;top:1197.87px;font-size:26.5px;font-weight:400;color:#333;letter-spacing:0.000px;transform:scaleX(0.9518);">Page</span>
<span class="t" style="left:1114.00px;top:1202.23px;font-size:23px;font-weight:400;color:#555;letter-spacing:0.000px;">1</span>
<span class="t" style="left:1183.54px;top:1197.87px;font-size:26.5px;font-weight:400;color:#333;letter-spacing:0.000px;transform:scaleX(0.9608);">of 1</span>
<span class="t" style="left:2065.60px;top:1199.84px;font-size:27px;font-weight:400;color:#333;letter-spacing:0.000px;transform:scaleX(0.9720);">View 1 - 9 of 9</span>
</div>
</body></html>
